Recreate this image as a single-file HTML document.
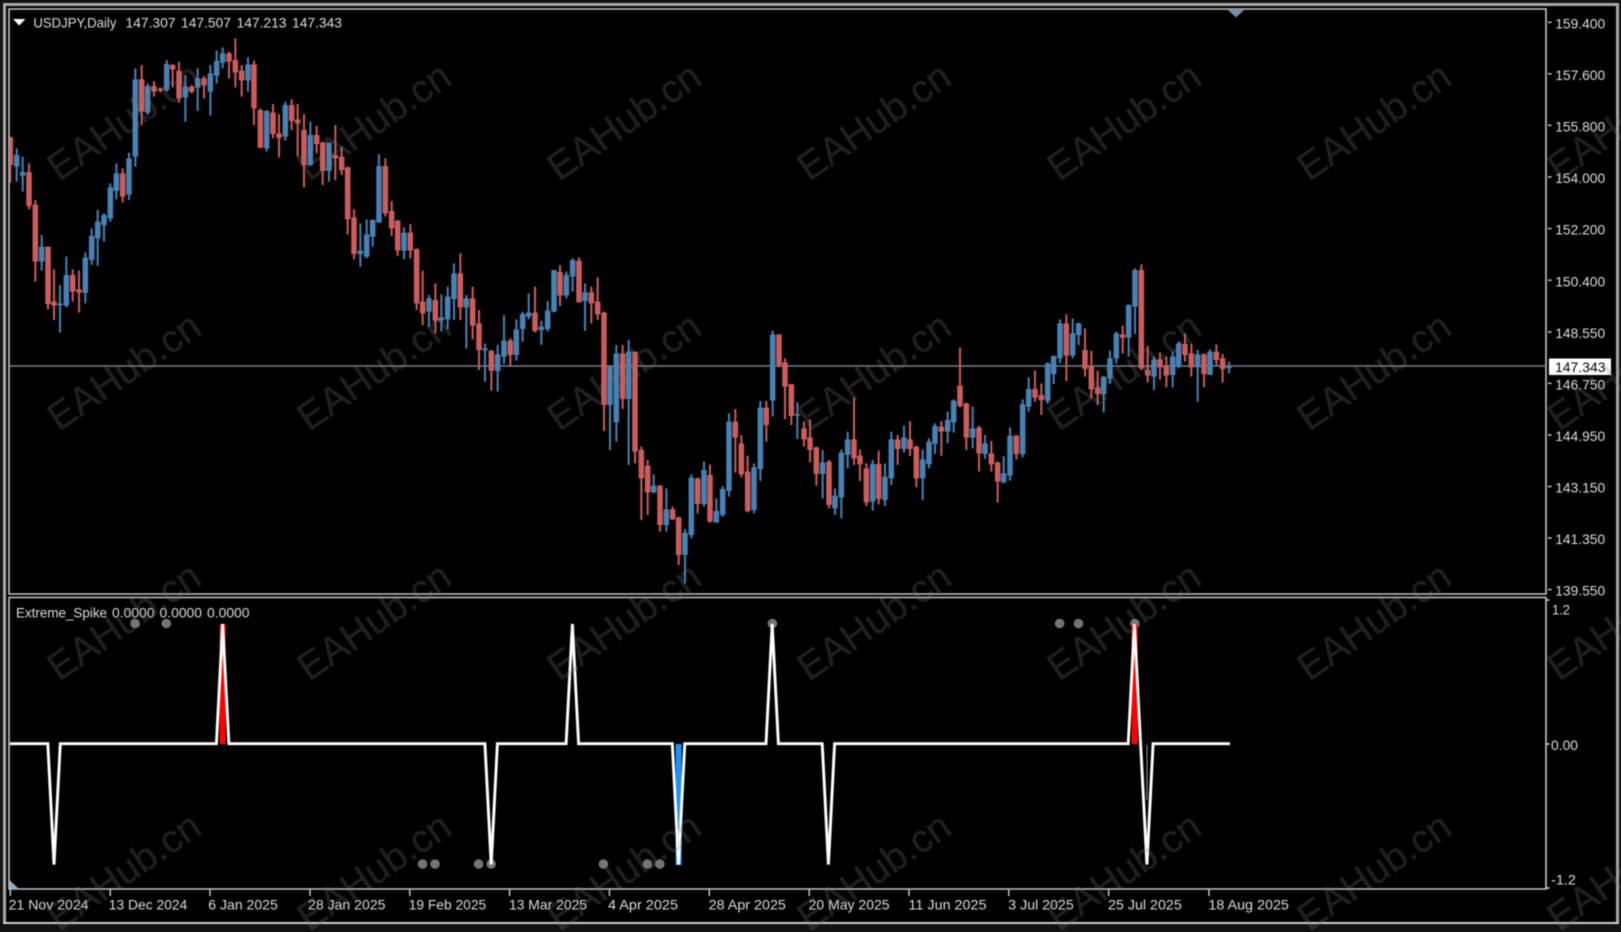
<!DOCTYPE html>
<html lang="en"><head><meta charset="utf-8"><title>USDJPY,Daily</title>
<style>
html,body{margin:0;padding:0;background:#121212;width:1621px;height:932px;overflow:hidden}
svg{display:block;filter:blur(.6px)}
text{font-family:"Liberation Sans",sans-serif;font-size:14px;fill:#dcdcdc}
.wm text{font-size:39px;fill:#808080;stroke:#808080;stroke-width:.4px;opacity:.24}
</style></head><body>
<svg xmlns="http://www.w3.org/2000/svg" width="1621" height="932" viewBox="0 0 1621 932">
<defs><clipPath id="main"><rect x="10" y="10" width="1536" height="583"/></clipPath></defs>
<rect width="1621" height="932" fill="#121212"/>
<rect x="4" y="4" width="1614" height="919" fill="#000"/>
<path d="M3 4.5H1618M4.5 3V924M1617.5 3V924" stroke="#a8a8a8" stroke-width="3" fill="none"/>
<path d="M3 923H1618" stroke="#cfcfcf" stroke-width="2" fill="none"/>
<path d="M1546 9H9V594H1546ZM9 597.5H1546V889H9Z" stroke="#c4c4c4" stroke-width="1.6" fill="none"/>
<path d="M1228 10H1244L1236 17.5Z" fill="#7390a8"/>
<path d="M9.5 889V880L19 889Z" fill="#8eaccb"/>
<path d="M10 366H1546" stroke="#708090" stroke-width="1.5"/>
<g clip-path="url(#main)" fill="none">
<g transform="scale(.33333)">
<path stroke="#cd5c5c" stroke-width="6" d="M31 410V548M87 490V628M106 600V845M144 740V928M162 808V960M218 808V905M237 812V938M368 505V608M425 195V375M462 243V290M481 262V278M518 192V262M537 185V308M575 255V280M612 228V295M687 155V235M706 115V262M725 195V290M762 182V375M781 325V445M819 312V415M837 342V472M875 298V390M893 312V470M912 342V562M950 378V460M968 425V555M1006 375V540M1025 440V525M1043 500V703M1062 628V778M1156 475V650M1175 603V708M1193 660V768M1231 672V775M1250 745V930"/>
<path stroke="#cd5c5c" stroke-width="16.5" d="M31 412V495M87 516V618M106 614V785M144 740V912M162 905V917M218 825V875M237 868V878M368 520V590M425 238V335M462 258V275M481 266V272M518 195V208M537 212V295M575 260V275M612 235V256M687 160V185M706 180V218M725 212V241M762 193V325M781 330V443M819 338V402M837 400V414M875 315V363M893 358V370M912 390V495M950 405V432M968 428V513M1006 465V475M1025 470V510M1043 502V658M1062 652V762M1156 498V640M1175 633V685M1193 662V752M1231 698V752M1250 747V910"/>
<path stroke="#4682b4" stroke-width="6" d="M50 445V545M68 470V575M125 705V812M180 855V998M199 770V922M256 757V910M275 685V795M293 630V797M312 640V725M331 550V665M349 490V598M387 458V600M406 205V500M443 250V345M500 180V275M556 225V365M593 205V333M631 195V347M650 152V250M668 142V205M744 172V275M800 330V455M856 305V422M931 365V497M987 428V545M1081 670V800M1100 658V775M1118 658V740M1137 462V668M1212 682V778"/>
<path stroke="#4682b4" stroke-width="16.5" d="M50 465V500M68 516V527M125 740V785M180 910V916M199 825V917M256 773V879M275 708V780M293 665V715M312 645V676M331 562V655M349 520V573M387 475V584M406 238V470M443 258V338M500 192V270M556 260V292M593 235V263M631 220V275M650 183V227M668 160V188M744 193V241M800 333V445M856 315V410M931 405V495M987 428V513M1081 752V762M1100 703V770M1118 660V710M1137 498V668M1212 698V752"/>
</g>
<g transform="translate(400 230) scale(.33333)">
<path stroke="#cd5c5c" stroke-width="6" d="M68 122V285M106 160V310M181 70V270M218 170V328M237 240V420M274 360V482M331 325V410M405 170V307M480 105V228M537 82V217M574 170V280M593 142V270M612 245V603M668 345V537M705 365V700M724 650V870M743 690V855M780 765V905M818 830V870M836 860V1005M893 743V850M930 703V878M1006 537V728M1024 615V742M1043 677V847M1099 513V635M1137 313V412M1155 385V568M1174 462V585"/>
<path stroke="#cd5c5c" stroke-width="16.5" d="M68 215V250M106 210V272M181 130V232M218 205V287M237 280V360M274 362V422M331 332V375M405 248V303M480 126V197M537 92V217M574 187V220M593 215V253M612 248V525M668 370V507M705 365V665M724 660V745M743 707V787M780 767V885M818 838V868M836 862V975M893 745V822M930 735V875M1006 575V623M1024 640V733M1043 725V843M1099 533V585M1137 313V405M1155 397V470M1174 462V558"/>
<path stroke="#4682b4" stroke-width="6" d="M87 195V290M124 193V305M143 170V298M162 100V270M199 195V355M255 340V455M293 345V485M312 255V402M349 268V392M368 245V335M386 190V268M424 272V345M443 213V305M462 120V247M499 125V205M518 85V185M555 160V303M630 410V660M649 345V635M686 330V705M761 733V790M799 775V905M855 897V1060M874 733V925M912 695V830M949 805V878M968 768V860M987 550V800M1062 700V850M1081 513V753M1118 302V560M1192 517V627"/>
<path stroke="#4682b4" stroke-width="16.5" d="M87 205V245M124 262V272M143 200V268M162 130V207M199 205V232M255 355V361M293 373V423M312 332V380M349 298V375M368 252V297M386 248V260M424 290V300M443 242V297M462 120V245M499 135V197M518 90V140M555 187V213M630 410V525M649 370V577M686 365V507M761 767V787M799 838V885M855 908V975M874 743V915M912 720V822M949 843V878M968 777V855M987 575V783M1062 712V840M1081 533V717M1118 313V512M1192 552V557"/>
</g>
<g transform="translate(800 250) scale(.33333)">
<path stroke="#cd5c5c" stroke-width="6" d="M12 515V590M30 508V637M49 590V707M87 630V775M162 443V645M180 598V693M199 640V768M236 602V763M293 555V645M330 513V618M349 587V712M424 513V618M480 292V472M499 458V600M537 527V665M574 573V665M593 635V758M649 555V628M705 362V455M724 400V495M799 193V393M855 235V380M874 302V445M893 362V465M968 227V310M1024 43V360M1043 288V397M1080 307V388M1099 320V412M1155 250V335M1174 280V380M1212 310V412M1249 283V345M1268 312V398"/>
<path stroke="#cd5c5c" stroke-width="16.5" d="M12 535V568M30 562V600M49 592V672M87 635V765M162 568V625M180 617V643M199 655V757M236 642V747M293 568V597M330 568V597M349 590V685M424 530V545M480 407V468M499 460V563M537 533V610M574 610V643M593 637V695M649 557V612M705 417V443M724 435V450M799 220V317M855 300V357M874 350V418M893 413V432M968 253V263M1024 60V355M1043 360V377M1080 328V352M1099 347V377M1155 282V315M1174 310V352M1212 313V372M1249 305V330M1268 325V357"/>
<path stroke="#4682b4" stroke-width="6" d="M68 600V745M105 715V795M124 598V805M143 545V655M218 630V782M255 640V768M274 545V705M312 527V608M368 598V750M387 565V655M405 520V612M443 485V580M461 448V548M518 470V595M555 555V627M611 618V700M630 532V692M668 448V622M686 382V485M743 337V462M761 317V402M780 208V340M818 205V325M836 218V285M911 378V487M930 302V402M949 245V340M986 163V320M1005 55V252M1062 320V420M1118 305V412M1136 275V355M1193 300V455M1230 298V375M1287 335V370"/>
<path stroke="#4682b4" stroke-width="16.5" d="M68 638V672M105 737V775M124 608V742M143 568V615M218 642V755M255 680V750M274 568V685M312 562V597M368 628V685M387 575V643M405 528V582M443 510V545M461 452V517M518 535V563M555 580V612M611 670V697M630 557V677M668 463V612M686 417V470M743 340V453M761 318V372M780 220V325M818 250V317M836 220V255M911 380V432M930 325V385M949 250V325M986 165V263M1005 60V170M1062 328V380M1118 320V375M1136 280V348M1193 313V352M1230 305V375M1287 348V354"/>
</g>
</g>
<!-- header -->
<path d="M13 19H25.5L19.2 25.5Z" fill="#fff"/>
<text x="33.4" y="27.6" textLength="83" lengthAdjust="spacingAndGlyphs">USDJPY,Daily</text>
<text x="125.5" y="27.6" textLength="50" lengthAdjust="spacingAndGlyphs">147.307</text>
<text x="181" y="27.6" textLength="50" lengthAdjust="spacingAndGlyphs">147.507</text>
<text x="236.5" y="27.6" textLength="50" lengthAdjust="spacingAndGlyphs">147.213</text>
<text x="292" y="27.6" textLength="50" lengthAdjust="spacingAndGlyphs">147.343</text>
<!-- price axis -->
<path stroke="#cfcfcf" stroke-width="1.4" d="M1548 22.3h3.5M1548 73.8h3.5M1548 125.3h3.5M1548 177h3.5M1548 228.6h3.5M1548 280.2h3.5M1548 332h3.5M1548 383.3h3.5M1548 435h3.5M1548 486.5h3.5M1548 538h3.5M1548 589.6h3.5M1546 600h3.5M1546 744h3.5M1546 888h3.5"/>
<g transform="translate(-.8 -.9)">
<text x="1556" y="29.3" textLength="50" lengthAdjust="spacingAndGlyphs">159.400</text>
<text x="1556" y="80.8" textLength="50" lengthAdjust="spacingAndGlyphs">157.600</text>
<text x="1556" y="132.3" textLength="50" lengthAdjust="spacingAndGlyphs">155.800</text>
<text x="1556" y="184" textLength="50" lengthAdjust="spacingAndGlyphs">154.000</text>
<text x="1556" y="235.6" textLength="50" lengthAdjust="spacingAndGlyphs">152.200</text>
<text x="1556" y="287.2" textLength="50" lengthAdjust="spacingAndGlyphs">150.400</text>
<text x="1556" y="339" textLength="50" lengthAdjust="spacingAndGlyphs">148.550</text>
<text x="1556" y="390.3" textLength="50" lengthAdjust="spacingAndGlyphs">146.750</text>
<text x="1556" y="442" textLength="50" lengthAdjust="spacingAndGlyphs">144.950</text>
<text x="1556" y="493.5" textLength="50" lengthAdjust="spacingAndGlyphs">143.150</text>
<text x="1556" y="545" textLength="50" lengthAdjust="spacingAndGlyphs">141.350</text>
<text x="1556" y="596.6" textLength="50" lengthAdjust="spacingAndGlyphs">139.550</text>
</g>
<rect x="1549" y="358.5" width="62" height="16.5" fill="#fff"/>
<text x="1555" y="372" textLength="50.5" lengthAdjust="spacingAndGlyphs" style="fill:#000">147.343</text>
<text x="1552" y="614.7" textLength="18" lengthAdjust="spacingAndGlyphs">1.2</text>
<text x="1551" y="750.2" textLength="27" lengthAdjust="spacingAndGlyphs">0.00</text>
<text x="1551" y="884.6" textLength="25" lengthAdjust="spacingAndGlyphs">-1.2</text>
<!-- indicator -->
<text x="16" y="617.5" textLength="91" lengthAdjust="spacingAndGlyphs">Extreme_Spike</text>
<text x="112" y="617.5" textLength="42.5" lengthAdjust="spacingAndGlyphs">0.0000</text>
<text x="159.5" y="617.5" textLength="42.5" lengthAdjust="spacingAndGlyphs">0.0000</text>
<text x="207" y="617.5" textLength="42.5" lengthAdjust="spacingAndGlyphs">0.0000</text>
<g fill="#747474">
<circle cx="135" cy="623.5" r="4.8"/><circle cx="166.3" cy="623.5" r="4.8"/><circle cx="772.4" cy="623.5" r="4.8"/><circle cx="1059.6" cy="623.5" r="4.8"/><circle cx="1078.5" cy="623.5" r="4.8"/><circle cx="1134.8" cy="623.5" r="4.8"/>
<circle cx="422.5" cy="864" r="4.8"/><circle cx="435" cy="864" r="4.8"/><circle cx="478.6" cy="864" r="4.8"/><circle cx="491.2" cy="864" r="4.8"/><circle cx="603.4" cy="864" r="4.8"/><circle cx="647.4" cy="864" r="4.8"/><circle cx="659.8" cy="864" r="4.8"/>
</g>
<rect x="219.6" y="624" width="6" height="120" fill="#f00"/>
<rect x="1131.5" y="624" width="6.2" height="120" fill="#f00"/>
<rect x="675.6" y="744" width="6" height="121" fill="#1e90ff"/>
<path d="M1147 745V800" stroke="#999" stroke-width="1"/>
<path fill="none" stroke="#fff" stroke-width="2.9" stroke-linejoin="miter" stroke-miterlimit="2" d="M10 743.7H47.8L54 864.5L60.3 743.7H216.4L222.6 624L228.9 743.7H484.9L491.2 864.5L497.4 743.7H566.1L572.4 624L578.6 743.7H672.3L678.5 864.5L684.8 743.7H766L772.2 624L778.4 743.7H822.2L828.4 864.5L834.6 743.7H1128.2L1134.4 624L1140.6 743.7L1146.9 864.5L1153.1 743.7H1230"/>
<!-- time axis -->
<path stroke="#cfcfcf" stroke-width="1.4" d="M10.3 889v7M110.2 889v7M210 889v7M310 889v7M409.8 889v7M509.6 889v7M609.5 889v7M709.3 889v7M809.2 889v7M909 889v7M1008.8 889v7M1108.7 889v7M1209 889v7"/>
<g transform="translate(0 -1)">
<text x="8.6" y="910.5" textLength="80" lengthAdjust="spacingAndGlyphs">21 Nov 2024</text>
<text x="108.8" y="910.5" textLength="78.5" lengthAdjust="spacingAndGlyphs">13 Dec 2024</text>
<text x="208.3" y="910.5" textLength="69.5" lengthAdjust="spacingAndGlyphs">6 Jan 2025</text>
<text x="308" y="910.5" textLength="77.5" lengthAdjust="spacingAndGlyphs">28 Jan 2025</text>
<text x="408.7" y="910.5" textLength="77.5" lengthAdjust="spacingAndGlyphs">19 Feb 2025</text>
<text x="509" y="910.5" textLength="78" lengthAdjust="spacingAndGlyphs">13 Mar 2025</text>
<text x="608" y="910.5" textLength="70" lengthAdjust="spacingAndGlyphs">4 Apr 2025</text>
<text x="708.7" y="910.5" textLength="77.2" lengthAdjust="spacingAndGlyphs">28 Apr 2025</text>
<text x="808.6" y="910.5" textLength="81" lengthAdjust="spacingAndGlyphs">20 May 2025</text>
<text x="908.5" y="910.5" textLength="78" lengthAdjust="spacingAndGlyphs">11 Jun 2025</text>
<text x="1008.3" y="910.5" textLength="65.4" lengthAdjust="spacingAndGlyphs">3 Jul 2025</text>
<text x="1108" y="910.5" textLength="73.8" lengthAdjust="spacingAndGlyphs">25 Jul 2025</text>
<text x="1208.4" y="910.5" textLength="80.5" lengthAdjust="spacingAndGlyphs">18 Aug 2025</text>
</g>
<!-- watermark -->
<g class="wm" transform="translate(-4 4)">
<text transform="translate(63 178) rotate(-34.5)">EAHub.cn</text><text transform="translate(313 178) rotate(-34.5)">EAHub.cn</text><text transform="translate(563 178) rotate(-34.5)">EAHub.cn</text><text transform="translate(813 178) rotate(-34.5)">EAHub.cn</text><text transform="translate(1063 178) rotate(-34.5)">EAHub.cn</text><text transform="translate(1313 178) rotate(-34.5)">EAHub.cn</text><text transform="translate(1563 178) rotate(-34.5)">EAHub.cn</text>
<text transform="translate(63 428) rotate(-34.5)">EAHub.cn</text><text transform="translate(313 428) rotate(-34.5)">EAHub.cn</text><text transform="translate(563 428) rotate(-34.5)">EAHub.cn</text><text transform="translate(813 428) rotate(-34.5)">EAHub.cn</text><text transform="translate(1063 428) rotate(-34.5)">EAHub.cn</text><text transform="translate(1313 428) rotate(-34.5)">EAHub.cn</text><text transform="translate(1563 428) rotate(-34.5)">EAHub.cn</text>
<text transform="translate(63 678) rotate(-34.5)">EAHub.cn</text><text transform="translate(313 678) rotate(-34.5)">EAHub.cn</text><text transform="translate(563 678) rotate(-34.5)">EAHub.cn</text><text transform="translate(813 678) rotate(-34.5)">EAHub.cn</text><text transform="translate(1063 678) rotate(-34.5)">EAHub.cn</text><text transform="translate(1313 678) rotate(-34.5)">EAHub.cn</text><text transform="translate(1563 678) rotate(-34.5)">EAHub.cn</text>
<text transform="translate(63 928) rotate(-34.5)">EAHub.cn</text><text transform="translate(313 928) rotate(-34.5)">EAHub.cn</text><text transform="translate(563 928) rotate(-34.5)">EAHub.cn</text><text transform="translate(813 928) rotate(-34.5)">EAHub.cn</text><text transform="translate(1063 928) rotate(-34.5)">EAHub.cn</text><text transform="translate(1313 928) rotate(-34.5)">EAHub.cn</text><text transform="translate(1563 928) rotate(-34.5)">EAHub.cn</text>
</g>
</svg>
</body></html>
